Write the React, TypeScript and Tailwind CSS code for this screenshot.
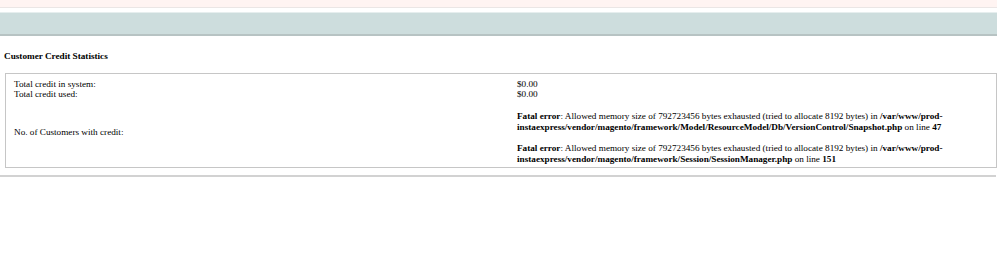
import React from "react";

const FatalError = ({ file, line }: { file: string; line: string }) => (
  <>
    <b>Fatal error</b>: Allowed memory size of 792723456 bytes exhausted (tried
    to allocate 8192 bytes) in <b>{file}</b> on line <b>{line}</b>
  </>
);

export default function App() {
  return (
    <div className="w-[997px] h-[265px] bg-white text-black font-['Liberation_Serif',serif] text-[9.2px] leading-[10.7px]">
      {/* top notice strip */}
      <div className="h-[7px] bg-[#fff4f2]" />
      <div className="h-px bg-[#ebe6e5]" />
      <div className="h-[4px]" />
      {/* header bar */}
      <div className="h-px bg-[#e6eeee]" />
      <div className="h-[21px] bg-[#cddddd]" />
      <div className="h-[2px] bg-[#b7c3c3]" />

      <h2 className="mt-[15px] ml-[4px] font-bold">Customer Credit Statistics</h2>

      <div className="mt-[11px] ml-[5px] w-[992px] border border-[#c6c6c6] pt-[5px] pb-[3px]">
        <div className="flex">
          <div className="w-[511px] pl-[8px]">Total credit in system:</div>
          <div className="flex-1">$0.00</div>
        </div>
        <div className="flex">
          <div className="w-[511px] pl-[8px]">Total credit used:</div>
          <div className="flex-1">$0.00</div>
        </div>
        <div className="flex">
          <div className="w-[511px] pl-[8px] flex items-center">
            No. of Customers with credit:
          </div>
          <div className="flex-1 pr-[50px]">
            <br />
            <FatalError
              file="/var/www/prod-instaexpress/vendor/magento/framework/Model/ResourceModel/Db/VersionControl/Snapshot.php"
              line="47"
            />
            <br />
            <br />
            <FatalError
              file="/var/www/prod-instaexpress/vendor/magento/framework/Session/SessionManager.php"
              line="151"
            />
          </div>
        </div>
      </div>

      <div className="mt-[7px] w-[996px] h-[2px] bg-[#d2d2d2]" />
    </div>
  );
}
